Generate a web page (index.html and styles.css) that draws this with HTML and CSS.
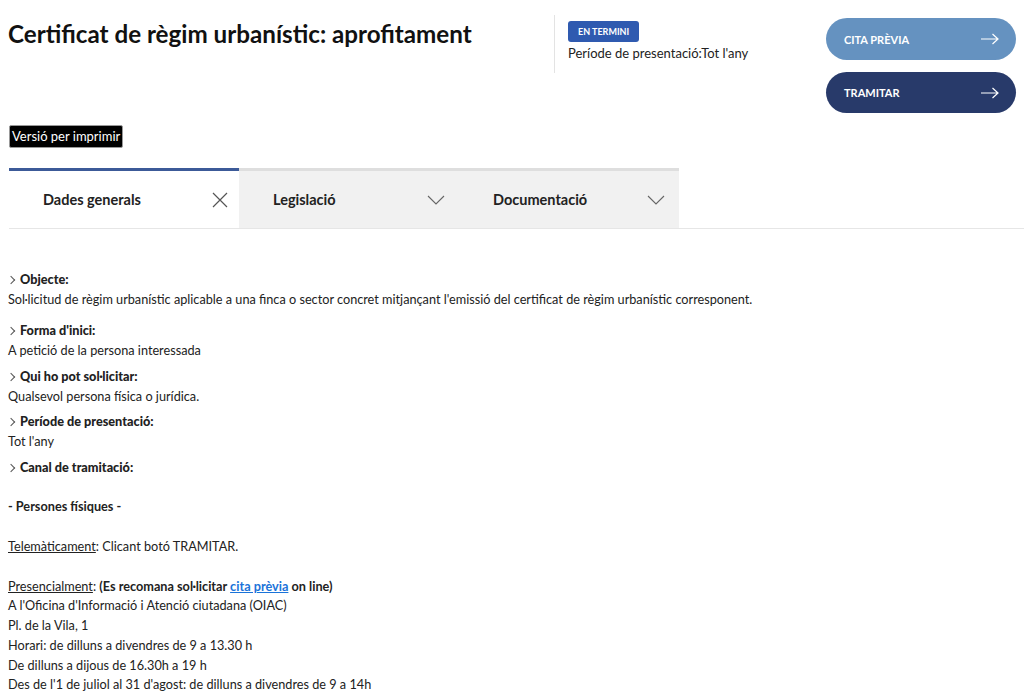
FILE: index.html
```html
<!DOCTYPE html>
<html lang="ca">
<head>
    <meta charset="UTF-8">
    <meta name="viewport" content="width=device-width, initial-scale=1.0">
    <title>Certificat de règim urbanístic: aprofitament</title>
    <link rel="stylesheet" href="styles.css">
</head>
<body>

    <div class="header">
        <h1 class="title">Certificat de règim urbanístic: aprofitament</h1>
        <div class="meta">
            <span class="badge">EN TERMINI</span>
            <p class="period">Període de presentació:Tot l'any</p>
        </div>
        <div class="actions">
            <a href="#" class="btn btn-light">CITA PRÈVIA
                <svg width="20" height="12" viewBox="0 0 20 12"><path d="M1 6h17M12.5 1l5.5 5-5.5 5" fill="none" stroke="#fff" stroke-width="1.2"/></svg>
            </a>
            <a href="#" class="btn btn-dark">TRAMITAR
                <svg width="20" height="12" viewBox="0 0 20 12"><path d="M1 6h17M12.5 1l5.5 5-5.5 5" fill="none" stroke="#fff" stroke-width="1.2"/></svg>
            </a>
        </div>
    </div>

    <button class="print">Versió per imprimir</button>

    <div class="tabs">
        <div class="tab active">
            <span>Dades generals</span>
            <svg width="16" height="16" viewBox="0 0 16 16"><path d="M1 1l14 14M15 1L1 15" stroke="#555" stroke-width="1.2"/></svg>
        </div>
        <div class="tab">
            <span>Legislació</span>
            <svg width="18" height="10" viewBox="0 0 18 10"><path d="M1 1l8 8 8-8" fill="none" stroke="#666" stroke-width="1.1"/></svg>
        </div>
        <div class="tab">
            <span>Documentació</span>
            <svg width="18" height="10" viewBox="0 0 18 10"><path d="M1 1l8 8 8-8" fill="none" stroke="#666" stroke-width="1.1"/></svg>
        </div>
    </div>

    <div class="content">
        <div class="field">
            <h4>Objecte:</h4>
            <p>Sol·licitud de règim urbanístic aplicable a una finca o sector concret mitjançant l'emissió del certificat de règim urbanístic corresponent.</p>
        </div>
        <div class="field">
            <h4>Forma d'inici:</h4>
            <p>A petició de la persona interessada</p>
        </div>
        <div class="field">
            <h4>Qui ho pot sol·licitar:</h4>
            <p>Qualsevol persona física o jurídica.</p>
        </div>
        <div class="field">
            <h4>Període de presentació:</h4>
            <p>Tot l'any</p>
        </div>
        <div class="field">
            <h4>Canal de tramitació:</h4>
            <div class="channel">
                <p><b>- Persones físiques -</b></p>
                <p><u>Telemàticament</u>: Clicant botó TRAMITAR.</p>
                <p><u>Presencialment</u>: <b>(Es recomana sol·licitar <a href="#">cita prèvia</a> on line)</b><br>
                A l'Oficina d'Informació i Atenció ciutadana (OIAC)<br>
                Pl. de la Vila, 1<br>
                Horari: de dilluns a divendres de 9 a 13.30 h<br>
                De dilluns a dijous de 16.30h a 19 h<br>
                Des de l'1 de juliol al 31 d'agost: de dilluns a divendres de 9 a 14h</p>
            </div>
        </div>
    </div>

</body>
</html>
```

FILE: styles.css
```css
body { margin: 0; padding: 0 8px; font-family: Lato, "Noto Sans", sans-serif; color: #222; background: #fff; }
p { margin: 0; }

.header { display: flex; align-items: flex-start; padding-top: 15px; }
.title { flex: 0 0 546px; margin: 4px 0 0; font-size: 24.2px; font-weight: 700; color: #111; }
.meta { flex: 1; border-left: 1px solid #e3e3e3; padding: 4px 0 12px 13px; min-height: 40px; }
.badge { display: inline-block; background: #2f5ab0; color: #fff; font-size: 9px; font-weight: 700; padding: 5px 10px; border-radius: 3px; }
.period { font-size: 13px; margin-top: 3px; }

.actions { display: flex; flex-direction: column; gap: 12px; width: 190px; margin-top: 3px; }
.btn { display: flex; align-items: center; justify-content: space-between; height: 42px; border-radius: 21px; padding: 0 16px 0 18px; color: #fff; text-decoration: none; font-size: 11px; font-weight: 700; }
.btn-light { background: #6592c0; }
.btn-dark { background: #283a6a; height: 41px; }

.print { display: block; margin: 12px 0 0 1px; background: #000; color: #fff; border: 1px solid #999; border-radius: 2px; font-family: inherit; font-size: 13px; padding: 2px 2px 3px; }

.tabs { display: flex; margin: 20px -8px 0 1px; border-bottom: 1px solid #e6e6e6; }
.tab { width: 220px; height: 60px; display: flex; align-items: center; justify-content: space-between; padding: 0 14px 0 34px; box-sizing: border-box; background: #f1f1f1; border-top: 3px solid #dedede; font-size: 14.5px; font-weight: 700; }
.tab.active { width: 230px; background: #fff; border-top-color: #3c5a98; padding-right: 11px; }

.content { padding-top: 41px; font-size: 12.7px; }
.field { margin-top: 6px; }
.field:first-child { margin-top: 0; }
.field:nth-child(2) { margin-top: 12px; }
.field h4 { margin: 0; font-size: 12.7px; font-weight: 900; line-height: 19.7px; }
.field h4::before { content: ""; display: inline-block; width: 5px; height: 5px; border-top: 1px solid #555; border-right: 1px solid #555; transform: rotate(45deg); margin: 0 6px 1px 0; }
.field p { line-height: 19.7px; }
.channel { padding-top: 20px; }
.channel p { margin-bottom: 20px; }
.channel p:last-child { margin-bottom: 0; }
a { color: #1a73d9; }
```
